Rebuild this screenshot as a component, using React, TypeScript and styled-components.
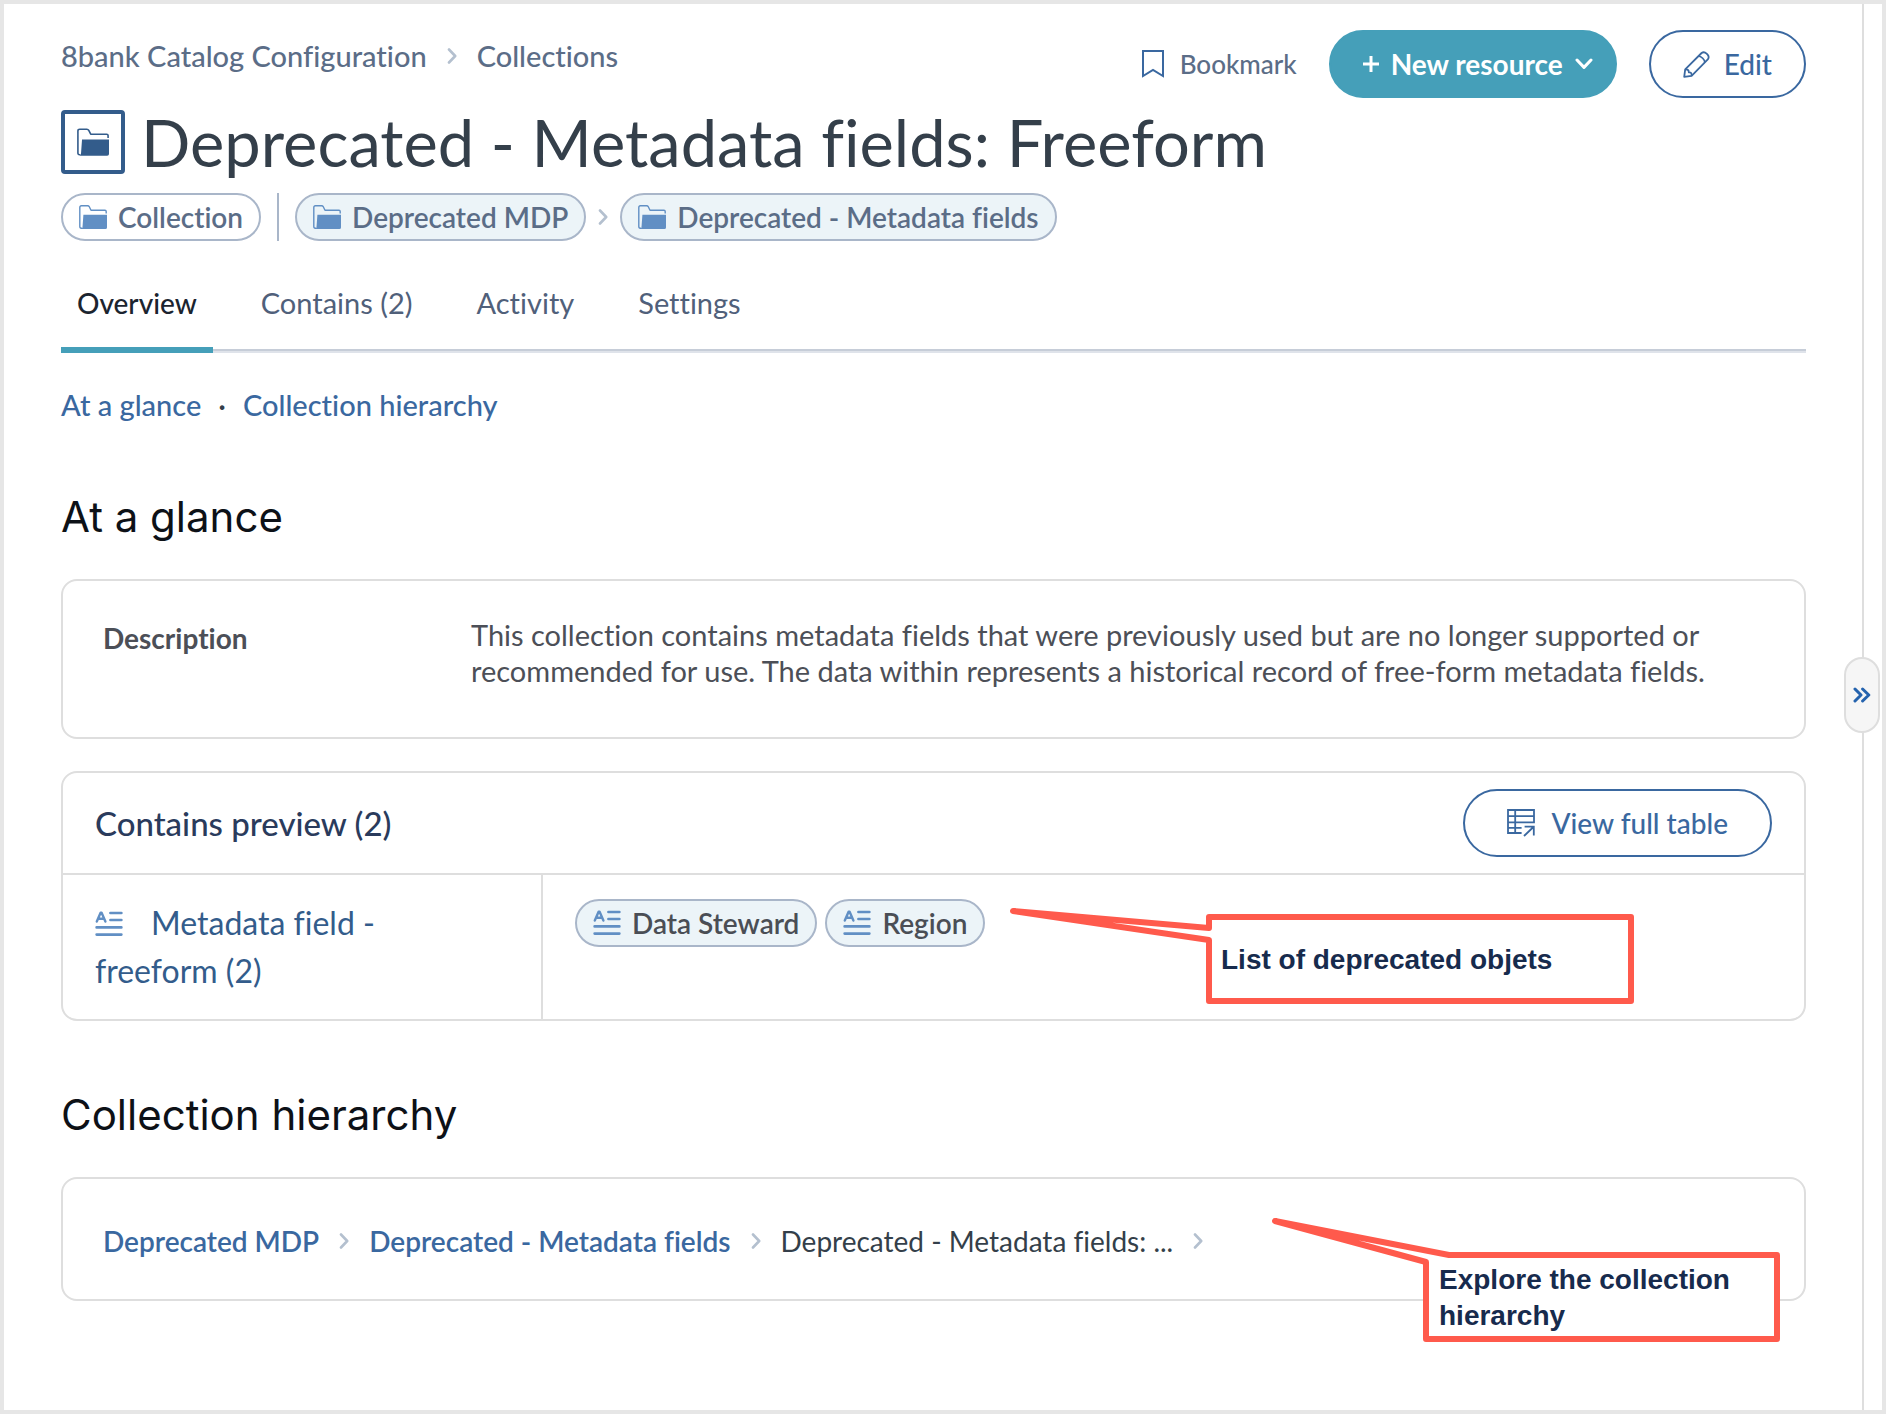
import React from "react";
import styled, { createGlobalStyle } from "styled-components";

const color = {
  frame: "#e6e6e6",
  line: "#dedede",
  slate: "#5b6d87",
  link: "#3a68a0",
  deep: "#335c8b",
  teal: "#459fb9",
  chipBorder: "#a9b6c9",
  chipFill: "#ecf4f8",
  icon: "#618fc4",
  callout: "#ff5a4c",
};

const GlobalStyle = createGlobalStyle`
  *, *::before, *::after { box-sizing: border-box; }
  body {
    margin: 0;
    background: #ffffff;
    font-family: Lato, "Open Sans", sans-serif;
    font-size: 29px;
    line-height: 36px;
    font-variant-ligatures: none;
    color: #343f4a;
  }
  h1, h2, h3, p, dl, dd { margin: 0; font-weight: 400; }
  a { text-decoration: none; color: inherit; }
  button { font: inherit; font-variant-ligatures: none; cursor: pointer; }
  svg { display: block; flex: none; }
`;

const Frame = styled.div`
  display: flex;
  min-height: 100vh;
  border: 4px solid ${color.frame};
`;

const Main = styled.main`
  flex: 1;
  min-width: 0;
  padding: 26px 56px 64px 57px;
`;

const Rail = styled.aside`
  position: relative;
  flex: none;
  width: 20px;
  border-left: 2px solid ${color.line};
`;

const RailToggle = styled.button`
  position: absolute;
  top: 653px;
  left: -20px;
  display: flex;
  align-items: center;
  justify-content: center;
  width: 36px;
  height: 76px;
  padding: 0;
  border: 2px solid ${color.line};
  border-radius: 18px;
  background: #f6f6f6;
  color: #2563ae;
`;

const TopRow = styled.div`
  display: flex;
  justify-content: space-between;
  align-items: flex-start;
`;

const Crumbs = styled.nav`
  display: flex;
  align-items: center;
  gap: 20px;
  padding-top: 8px;
  color: ${color.slate};
  font-weight: 500;
`;

const Actions = styled.div`
  display: flex;
  align-items: center;
  gap: 32px;
`;

const PlainButton = styled.button`
  display: flex;
  align-items: center;
  gap: 16px;
  padding: 0;
  border: 0;
  background: none;
  color: ${color.slate};
  font-size: 26px;
  font-weight: 500;
`;

const PillButton = styled.button<{ $solid?: boolean; $pad: string; $gap: number }>`
  display: flex;
  align-items: center;
  gap: ${(p) => p.$gap}px;
  height: 68px;
  padding: ${(p) => p.$pad};
  border: 2px solid ${(p) => (p.$solid ? color.teal : color.link)};
  border-radius: 34px;
  background: ${(p) => (p.$solid ? color.teal : "#ffffff")};
  color: ${(p) => (p.$solid ? "#ffffff" : color.link)};
  font-size: 28px;
  font-weight: ${(p) => (p.$solid ? 700 : 500)};
`;

const TitleRow = styled.div`
  display: flex;
  align-items: center;
  gap: 16px;
  margin-top: 12px;
`;

const TitleIcon = styled.span`
  display: flex;
  align-items: center;
  justify-content: center;
  width: 64px;
  height: 64px;
  border: 4px solid ${color.deep};
  border-radius: 4px;
  color: ${color.deep};
`;

const Title = styled.h1`
  font-size: 65px;
  line-height: 64px;
`;

const ChipRow = styled.div<{ $gap: number; $top?: number }>`
  display: flex;
  align-items: center;
  gap: ${(p) => p.$gap}px;
  margin-top: ${(p) => p.$top ?? 0}px;
`;

const Trail = styled.div`
  display: flex;
  align-items: center;
  gap: 12px;
`;

const Chip = styled.a<{ $plain?: boolean; $dark?: boolean }>`
  display: flex;
  align-items: center;
  gap: 11px;
  height: 48px;
  padding: 0 16px;
  border: 2px solid ${color.chipBorder};
  border-radius: 24px;
  background: ${(p) => (p.$plain ? "#ffffff" : color.chipFill)};
  && {
    color: ${(p) => (p.$dark ? "#4a4e55" : color.slate)};
  }
  font-size: 28px;
  font-weight: 600;
  svg {
    color: ${color.icon};
  }
`;

const Divider = styled.span`
  width: 2px;
  height: 48px;
  background: ${color.chipBorder};
`;

const Tabs = styled.nav`
  display: flex;
  gap: 32px;
  margin-top: 44px;
  box-shadow: inset 0 -2px #dfe3ea, inset 0 -4px #c6cdd8;
`;

const Tab = styled.a<{ $active?: boolean }>`
  padding: 0 16px 26px;
  border-bottom: 6px solid ${(p) => (p.$active ? color.teal : "transparent")};
  && {
    color: ${(p) => (p.$active ? "#1b242f" : "#50607a")};
  }
  font-size: ${(p) => (p.$active ? 28 : 29)}px;
  font-weight: ${(p) => (p.$active ? 500 : 400)};
`;

const Jump = styled.nav`
  display: flex;
  gap: 17px;
  margin-top: 34px;
  font-weight: 500;
  a {
    color: ${color.link};
  }
`;

const SectionTitle = styled.h2`
  margin: 64px 0 32px;
  color: #0d1117;
  font-family: Inter, "Open Sans", sans-serif;
  font-size: 42px;
  line-height: 60px;
`;

const Card = styled.section`
  position: relative;
  border: 2px solid ${color.line};
  border-radius: 16px;
  & + & {
    margin-top: 32px;
  }
`;

const Details = styled.dl`
  display: grid;
  grid-template-columns: 368px 1fr;
  padding: 36px 40px 48px;
  color: #4c4f57;
  dt {
    font-size: 28px;
    font-weight: 700;
    line-height: 42px;
  }
`;

const CardHead = styled.div`
  display: flex;
  align-items: center;
  justify-content: space-between;
  padding: 16px 32px;
  border-bottom: 2px solid ${color.line};
`;

const CardTitle = styled.h3`
  color: #2a3b5c;
  font-size: 33px;
  font-weight: 500;
`;

const Preview = styled.table`
  width: 100%;
  border-collapse: separate;
  border-spacing: 0;
  th,
  td {
    padding: 24px 32px;
    vertical-align: top;
    text-align: left;
  }
  th {
    width: 480px;
    border-right: 2px solid ${color.line};
    color: ${color.deep};
    font-size: 32px;
    font-weight: 400;
    line-height: 48px;
  }
  th svg {
    display: inline-block;
    margin-right: 28px;
    vertical-align: -2px;
    color: ${color.icon};
  }
`;

const GroupLink = styled.a`
  display: block;
  max-width: 320px;
`;

const Path = styled.nav`
  display: flex;
  align-items: center;
  gap: 20px;
  padding: 44px 40px 40px;
  font-size: 28px;
  a {
    color: ${color.link};
    font-weight: 600;
  }
`;

const Callout = styled.div<{ $left: number; $top: number }>`
  position: absolute;
  left: ${(p) => p.$left}px;
  top: ${(p) => p.$top}px;
`;

const CalloutText = styled.p<{ $left: number; $top: number; $width: number }>`
  position: absolute;
  left: ${(p) => p.$left}px;
  top: ${(p) => p.$top}px;
  width: ${(p) => p.$width}px;
  color: #172b4d;
  font-family: "Liberation Sans", Arial, sans-serif;
  font-size: 28px;
  font-weight: 700;
`;

const Chevron = () => (
  <svg width="10" height="16" viewBox="0 0 10 16" fill="none" stroke="#b4c0cf" strokeWidth="2.6" strokeLinecap="round" strokeLinejoin="round" aria-hidden="true">
    <path d="M2 1.5 8.2 8 2 14.5" />
  </svg>
);

const Folder = ({ width = 28, height = 24 }: { width?: number; height?: number }) => (
  <svg width={width} height={height} viewBox="0 0 28 24" fill="none" stroke="currentColor" strokeWidth="1.4" strokeLinejoin="round" aria-hidden="true">
    <path d="M3 23.2H2.2Q.8 23.2.8 21.6V2.4Q.8.8 2.4.8H8.6Q9.8.8 10.3 1.8L12 5.2H26Q27.2 5.2 27.2 6.4V8.6" />
    <path d="M4.4 9.8H28V22.4Q28 24 26.4 24H2.6Q3.6 23 3.6 21Z" fill="currentColor" stroke="none" />
  </svg>
);

const FieldIcon = () => (
  <svg width="28" height="26" viewBox="0 0 28 26" fill="none" stroke="currentColor" strokeWidth="2.6" strokeLinecap="round" strokeLinejoin="round" aria-hidden="true">
    <path d="M15.4 2H26.4M15.4 9H26.4M1.6 16.4H26.4M1.6 23.6H26.4" />
    <path d="M1.8 10.6 5.6 1.8H6.6L10.4 10.6M3.2 7.8H9" strokeWidth="2.4" />
  </svg>
);

const BookmarkIcon = () => (
  <svg width="22" height="28" viewBox="0 0 22 28" fill="none" stroke={color.link} strokeWidth="2" aria-hidden="true">
    <path d="M1 1H21V26L11 20 1 26Z" />
  </svg>
);

const PencilIcon = () => (
  <svg width="27" height="27" viewBox="0 0 27 27" fill="none" stroke="currentColor" strokeWidth="1.8" strokeLinejoin="round" aria-hidden="true">
    <path d="M1.2 25.8 2.2 18.4 18.6 2Q21 .2 23.6 2.6L24.6 3.6Q26.6 6 24.8 8.4L8.6 24.8Z" />
    <path d="M2.2 18.4Q6 18 5.8 21.4 9 21 8.6 24.8M15.6 5Q20.6 6.4 22 11.2" />
  </svg>
);

const PlusIcon = () => (
  <svg width="16" height="18" viewBox="0 0 16 18" stroke="currentColor" strokeWidth="3" fill="none" aria-hidden="true">
    <path d="M8 1V17M0 9H16" />
  </svg>
);

const CaretIcon = () => (
  <svg width="18" height="12" viewBox="0 0 18 12" stroke="currentColor" strokeWidth="3" strokeLinecap="round" strokeLinejoin="round" fill="none" aria-hidden="true">
    <path d="M2 2 9 9.4 16 2" />
  </svg>
);

const TableIcon = () => (
  <svg width="28" height="28" viewBox="0 0 28 28" fill="none" stroke="currentColor" strokeWidth="1.8" aria-hidden="true">
    <path d="M14.6 24H1V1H27V13.4H1M1 7.2H27M1 18.8H14.6M8.2 1V24" />
    <path d="M17 27 26.4 18M17.6 17.6H26.8V26.4" />
  </svg>
);

const DoubleChevron = () => (
  <svg width="18" height="16" viewBox="0 0 18 16" stroke="currentColor" strokeWidth="3" strokeLinecap="round" strokeLinejoin="round" fill="none" aria-hidden="true">
    <path d="M2 2 8 8 2 14M9.6 2 15.8 8 9.6 14" />
  </svg>
);

const CalloutShape = ({ width, height, points }: { width: number; height: number; points: string }) => (
  <svg width={width} height={height} viewBox={`0 0 ${width} ${height}`} fill="#ffffff" stroke={color.callout} strokeWidth="6" strokeLinejoin="round" aria-hidden="true">
    <polygon points={points} />
  </svg>
);

export default function App() {
  return (
    <>
      <GlobalStyle />
      <Frame>
        <Main>
          <TopRow>
            <Crumbs aria-label="Breadcrumb">
              <a href="#catalog">8bank Catalog Configuration</a>
              <Chevron />
              <a href="#collections">Collections</a>
            </Crumbs>
            <Actions>
              <PlainButton type="button">
                <BookmarkIcon />
                Bookmark
              </PlainButton>
              <PillButton type="button" $solid $pad="0 22px 0 32px" $gap={12}>
                <PlusIcon />
                New resource
                <CaretIcon />
              </PillButton>
              <PillButton type="button" $pad="0 32px" $gap={14}>
                <PencilIcon />
                Edit
              </PillButton>
            </Actions>
          </TopRow>

          <TitleRow>
            <TitleIcon>
              <Folder width={32} height={28} />
            </TitleIcon>
            <Title>Deprecated - Metadata fields: Freeform</Title>
          </TitleRow>

          <ChipRow $gap={16} $top={19}>
            <Chip href="#collection" $plain>
              <Folder />
              Collection
            </Chip>
            <Divider />
            <Trail>
              <Chip href="#mdp">
                <Folder />
                Deprecated MDP
              </Chip>
              <Chevron />
              <Chip href="#fields">
                <Folder />
                Deprecated - Metadata fields
              </Chip>
            </Trail>
          </ChipRow>

          <Tabs aria-label="Sections">
            <Tab href="#overview" $active aria-current="page">Overview</Tab>
            <Tab href="#contains">Contains (2)</Tab>
            <Tab href="#activity">Activity</Tab>
            <Tab href="#settings">Settings</Tab>
          </Tabs>

          <Jump aria-label="On this page">
            <a href="#glance">At a glance</a>
            <span>·</span>
            <a href="#hierarchy">Collection hierarchy</a>
          </Jump>

          <SectionTitle id="glance">At a glance</SectionTitle>
          <Card>
            <Details>
              <dt>Description</dt>
              <dd>
                This collection contains metadata fields that were previously used but are no longer supported or
                recommended for use. The data within represents a historical record of free-form metadata fields.
              </dd>
            </Details>
          </Card>
          <Card>
            <CardHead>
              <CardTitle>Contains preview (2)</CardTitle>
              <PillButton type="button" $pad="0 42px" $gap={16}>
                <TableIcon />
                View full table
              </PillButton>
            </CardHead>
            <Preview>
              <tbody>
                <tr>
                  <th scope="row">
                    <GroupLink href="#freeform">
                      <FieldIcon />
                      Metadata field - freeform (2)
                    </GroupLink>
                  </th>
                  <td>
                    <ChipRow $gap={8}>
                      <Chip href="#steward" $dark>
                        <FieldIcon />
                        Data Steward
                      </Chip>
                      <Chip href="#region" $dark>
                        <FieldIcon />
                        Region
                      </Chip>
                    </ChipRow>
                  </td>
                </tr>
              </tbody>
            </Preview>
            <Callout $left={944} $top={132}>
              <CalloutShape width={630} height={102} points="6,6 202,23 202,12 624,12 624,96 202,96 202,35" />
              <CalloutText $left={214} $top={37} $width={400}>List of deprecated objets</CalloutText>
            </Callout>
          </Card>

          <SectionTitle id="hierarchy">Collection hierarchy</SectionTitle>
          <Card>
            <Path aria-label="Collection hierarchy">
              <a href="#mdp">Deprecated MDP</a>
              <Chevron />
              <a href="#fields">Deprecated - Metadata fields</a>
              <Chevron />
              <span>Deprecated - Metadata fields: ...</span>
              <Chevron />
            </Path>
            <Callout $left={1206} $top={36}>
              <CalloutShape width={514} height={130} points="6,6 180,40 508,40 508,124 157,124 157,47" />
              <CalloutText $left={170} $top={47} $width={330}>Explore the collection hierarchy</CalloutText>
            </Callout>
          </Card>
        </Main>
        <Rail>
          <RailToggle type="button" aria-label="Expand panel">
            <DoubleChevron />
          </RailToggle>
        </Rail>
      </Frame>
    </>
  );
}
